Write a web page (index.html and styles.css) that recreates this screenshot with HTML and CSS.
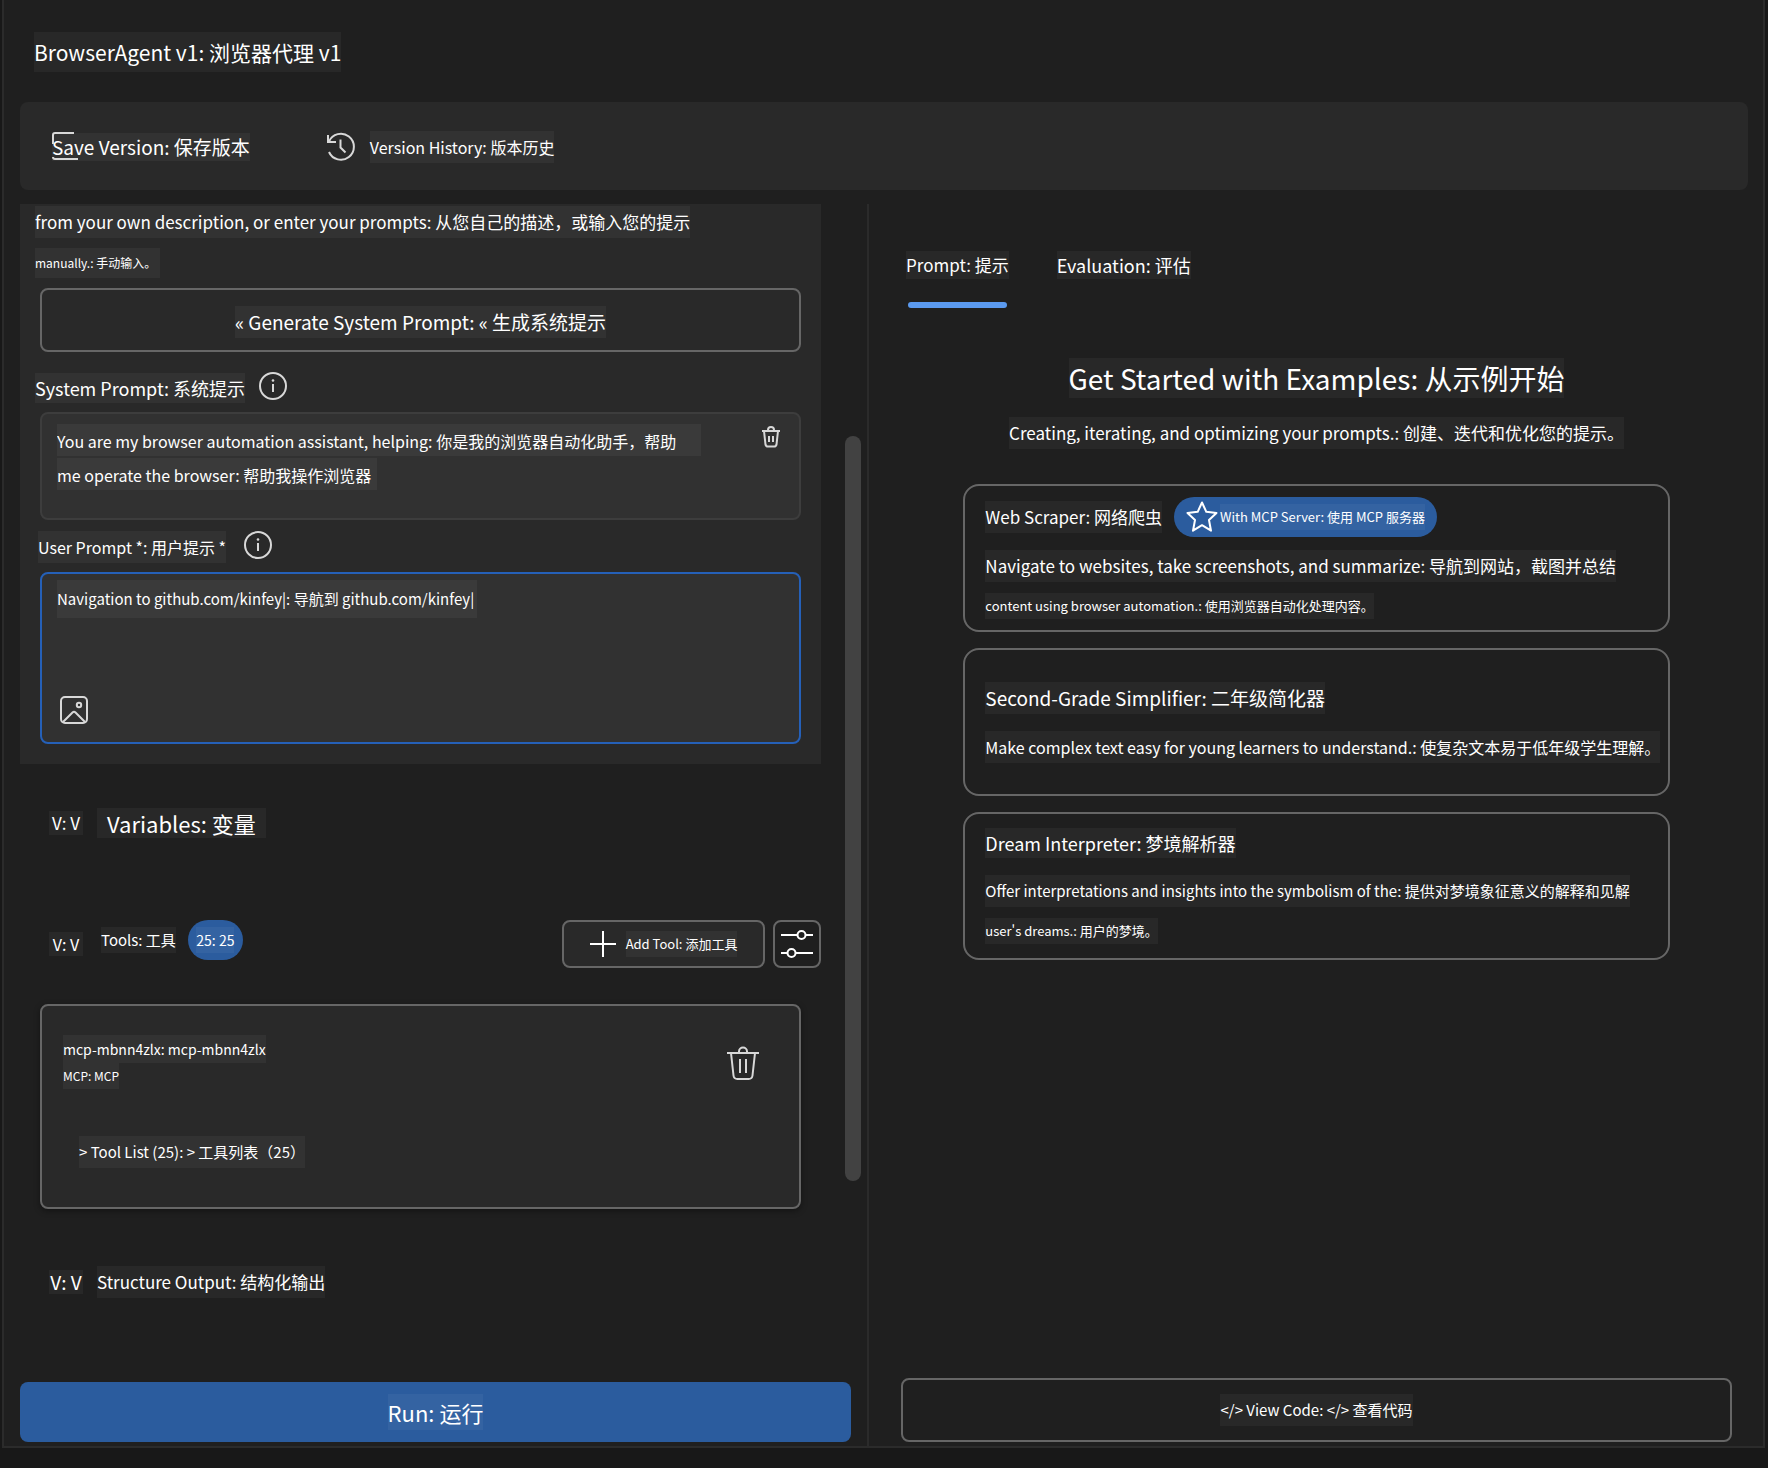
FILE: index.html
```html
<!DOCTYPE html>
<html lang="zh-CN">
<head>
  <meta charset="UTF-8">
  <meta name="viewport" content="width=device-width, initial-scale=1">
  <title>BrowserAgent v1</title>
  <link rel="stylesheet" href="styles.css">
</head>
<body>
<div class="page">
  <header class="header">
    <h1 class="chip size-21">BrowserAgent v1: 浏览器代理 v1</h1>
  </header>

  <nav class="toolbar">
    <button class="tool-btn save">
      <svg class="save-icon" width="28" height="28" viewBox="0 0 28 28"><path d="M1 12V3Q1 1 3 1H22M1 25Q1 27 3 27H26"/></svg>
      <span class="chip size-19">Save Version: 保存版本</span>
    </button>
    <button class="tool-btn">
      <svg class="icon" width="30" height="30" viewBox="0 0 30 30"><path d="M2 3v7h8M3 9.500A13 13 0 1 1 3 20M14.500 7.500v8l5 5"/></svg>
      <span class="chip size-16">Version History: 版本历史</span>
    </button>
  </nav>

  <main class="columns">
    <section class="left">
      <div class="scroll-area">
        <div class="content">
          <div class="prompt-panel">
            <p class="chip size-17">from your own description, or enter your prompts: 从您自己的描述，或输入您的提示</p>
            <p class="chip size-12 manual">manually.: 手动输入。</p>
            <button class="outline-btn generate"><span class="chip size-19">« Generate System Prompt: « 生成系统提示</span></button>

            <div class="field-label">
              <label class="chip size-18" for="system">System Prompt: 系统提示</label>
              <svg class="icon" width="28" height="28" viewBox="0 0 28 28"><circle cx="14" cy="14" r="13"/><path d="M14 12v8"/><circle class="dot" cx="14" cy="8.500" r="1.300"/></svg>
            </div>
            <div class="field system">
              <textarea id="system" class="size-16" rows="2" spellcheck="false">You are my browser automation assistant, helping: 你是我的浏览器自动化助手，帮助
me operate the browser: 帮助我操作浏览器</textarea>
              <button class="icon-btn" aria-label="Clear">
                <svg class="icon" width="20" height="22" viewBox="0 0 20 22"><path d="M1 5h18M7 5V4a3 3 0 0 1 6 0v1M3 5l1.500 13.500a2.500 2.500 0 0 0 2.500 2h6a2.500 2.500 0 0 0 2.500-2L17 5M8 10v6M12 10v6"/></svg>
              </button>
            </div>

            <div class="field-label user-label">
              <label class="chip size-16" for="user">User Prompt *: 用户提示 *</label>
              <svg class="icon" width="28" height="28" viewBox="0 0 28 28"><circle cx="14" cy="14" r="13"/><path d="M14 12v8"/><circle class="dot" cx="14" cy="8.500" r="1.300"/></svg>
            </div>
            <div class="field user">
              <textarea id="user" class="size-15" rows="1" spellcheck="false">Navigation to github.com/kinfey|: 导航到 github.com/kinfey|</textarea>
              <button class="icon-btn" aria-label="Add image">
                <svg class="icon" width="28" height="28" viewBox="0 0 28 28"><rect x="1" y="1" width="26" height="26" rx="4"/><circle cx="19" cy="9" r="2.200"/><path d="M3 26l9.500-9.500q1.500-1.500 3 0L25 26"/></svg>
              </button>
            </div>
          </div>

          <div class="group variables">
            <button class="chip toggle size-17">V: V</button>
            <h2 class="chip size-22">Variables: 变量</h2>
          </div>

          <div class="group tools">
            <button class="chip toggle size-16">V: V</button>
            <div class="tools-title">
              <h2 class="chip size-15">Tools: 工具</h2>
              <span class="count"><span class="chip size-14">25: 25</span></span>
            </div>
            <div class="tools-actions">
              <button class="outline-btn add-tool">
                <svg class="icon bright" width="26" height="26" viewBox="0 0 26 26"><path d="M13 0v26M0 13h26"/></svg>
                <span class="chip size-13">Add Tool: 添加工具</span>
              </button>
              <button class="outline-btn settings" aria-label="Settings">
                <svg class="icon bright" width="32" height="32" viewBox="0 0 32 32"><path d="M0 7h16M25 7h7M0 25h6M15 25h17"/><circle cx="20.500" cy="7" r="4"/><circle cx="10.500" cy="25" r="4"/></svg>
              </button>
            </div>
          </div>

          <article class="tool-card">
            <div>
              <h3 class="chip size-14">mcp-mbnn4zlx: mcp-mbnn4zlx</h3>
              <p class="chip size-12">MCP: MCP</p>
              <button class="chip tool-list size-15">&gt; Tool List (25): &gt; 工具列表（25）</button>
            </div>
            <button class="icon-btn" aria-label="Remove tool">
              <svg class="icon" width="32" height="34" viewBox="0 0 32 34"><path d="M0 7h32M12 7V5.500a4 4 0 0 1 8 0V7M4 7l2.500 22.500a4 4 0 0 0 4 3.500h11a4 4 0 0 0 4-3.500L28 7M13 13v14M19 13v14"/></svg>
            </button>
          </article>

          <div class="group structure">
            <button class="chip toggle size-19">V: V</button>
            <h2 class="chip size-17">Structure Output: 结构化输出</h2>
          </div>
        </div>
        <div class="scrollbar"><div class="thumb"></div></div>
      </div>
      <button class="run"><span class="chip size-22">Run: 运行</span></button>
    </section>

    <section class="right">
      <div class="tabs">
        <button class="tab active"><span class="chip size-17">Prompt: 提示</span></button>
        <button class="tab"><span class="chip size-18">Evaluation: 评估</span></button>
      </div>

      <div class="examples">
        <h2 class="chip size-28">Get Started with Examples: 从示例开始</h2>
        <p class="chip intro size-17">Creating, iterating, and optimizing your prompts.: 创建、迭代和优化您的提示。</p>

        <article class="example">
          <div class="example-head">
            <h3 class="chip size-17">Web Scraper: 网络爬虫</h3>
            <span class="badge">
              <svg class="icon bright" width="32" height="32" viewBox="0 0 32 32"><path stroke-linejoin="round" d="M16 1.500l4.300 9.300 10.200 1.200-7.500 7 2 10.700-9-5.500-9 5.500 2-10.700-7.500-7 10.200-1.200z"/></svg>
              <span class="chip size-13">With MCP Server: 使用 MCP 服务器</span>
            </span>
          </div>
          <p class="chip size-17">Navigate to websites, take screenshots, and summarize: 导航到网站，截图并总结</p>
          <p class="chip size-13">content using browser automation.: 使用浏览器自动化处理内容。</p>
        </article>

        <article class="example">
          <h3 class="chip size-19">Second-Grade Simplifier: 二年级简化器</h3>
          <p class="chip size-16">Make complex text easy for young learners to understand.: 使复杂文本易于低年级学生理解。</p>
        </article>

        <article class="example">
          <h3 class="chip size-18">Dream Interpreter: 梦境解析器</h3>
          <p class="chip size-15">Offer interpretations and insights into the symbolism of the: 提供对梦境象征意义的解释和见解</p>
          <p class="chip size-13">user's dreams.: 用户的梦境。</p>
        </article>
      </div>

      <button class="outline-btn view-code"><span class="chip size-15">&lt;/&gt; View Code: &lt;/&gt; 查看代码</span></button>
    </section>
  </main>
</div>
<footer class="status-bar"></footer>
</body>
</html>
```
FILE: styles.css
```css
* {
  box-sizing: border-box;
}

body {
  margin: 0;
  min-height: 100vh;
  display: flex;
  flex-direction: column;
  background: #181818;
  color: #fff;
  font-family: "Noto Sans CJK SC", "Noto Sans", sans-serif;
}

h1, h2, h3, p {
  margin: 0;
  font-weight: 400;
}

button, textarea {
  margin: 0;
  padding: 0;
  border: 0;
  background: none;
  color: inherit;
  font-family: inherit;
}

button {
  cursor: pointer;
}

.page {
  flex: 1;
  display: flex;
  flex-direction: column;
  margin: 0 3px 0 2px;
  border: 2px solid #2b2b2b;
  border-top: 0;
  background: #1f1f1f;
}

.status-bar {
  height: 20px;
}

/* Text with a slightly lighter plate behind it */
.chip {
  display: block;
  width: fit-content;
  background: rgba(255, 255, 255, 0.045);
  line-height: 32px;
  white-space: nowrap;
}

.size-12 { font-size: 12px; line-height: 26px; }
.size-13 { font-size: 13px; line-height: 26px; }
.size-14 { font-size: 14px; line-height: 28px; }
.size-15 { font-size: 15px; line-height: 32px; }
.size-16 { font-size: 16px; line-height: 32px; }
.size-17 { font-size: 17px; line-height: 32px; }
.size-18 { font-size: 18px; line-height: 30px; }
.size-19 { font-size: 19px; line-height: 32px; }
.size-21 { font-size: 21px; line-height: 32px; }
.size-22 { font-size: 22px; line-height: 36px; }
.size-28 { font-size: 28px; line-height: 40px; }

.icon {
  flex: none;
  display: block;
  fill: none;
  stroke: #d8d8d8;
  stroke-width: 2;
}

.icon.bright {
  stroke: #fff;
}

.icon .dot {
  fill: #d8d8d8;
  stroke: none;
}

/* Header */
.header {
  padding: 32px 30px 30px;
}

.header .chip {
  line-height: 40px;
}

.toolbar {
  display: flex;
  align-items: center;
  gap: 76px;
  height: 88px;
  margin: 0 15px 14px 16px;
  padding: 2px 32px 0;
  border-radius: 8px;
  background: #292929;
}

.tool-btn {
  display: flex;
  align-items: center;
  gap: 14px;
}

.save {
  position: relative;
}

.save .chip {
  line-height: 28px;
}

.save-icon {
  position: absolute;
  left: 0;
  top: -1px;
  fill: none;
  stroke: #d8d8d8;
  stroke-width: 2;
}

.columns {
  flex: 1;
  display: grid;
  grid-template-columns: 866fr 895fr;
}

/* Left column */
.left {
  display: flex;
  flex-direction: column;
  padding: 0 16px 4px;
  border-right: 2px solid #2b2b2b;
}

.scroll-area {
  flex: 1;
  display: flex;
  gap: 24px;
  margin-right: -10px;
}

.content {
  flex: 1;
}

.scrollbar {
  width: 16px;
  padding-top: 232px;
}

.thumb {
  height: 745px;
  border-radius: 8px;
  background: #424242;
}

.prompt-panel {
  padding: 2px 20px 20px 15px;
  background: #292929;
}

.manual {
  margin: 10px 0;
  padding-right: 4px;
  line-height: 30px;
}

.outline-btn {
  display: flex;
  align-items: center;
  justify-content: center;
  border: 2px solid #666;
  border-radius: 8px;
}

.generate {
  width: calc(100% - 5px);
  height: 64px;
  margin: 0 0 20px 5px;
  padding-top: 4px;
}

.field-label {
  display: flex;
  align-items: center;
  gap: 14px;
  height: 32px;
  margin-bottom: 8px;
}

.field-label .icon {
  margin-bottom: 4px;
}

.user-label {
  gap: 18px;
  padding-left: 3px;
  margin-bottom: 9px;
}

.field {
  display: flex;
  margin-left: 5px;
  padding: 10px 15px;
  border: 2px solid #3d3d3d;
  border-radius: 8px;
  background: #313131;
}

.field textarea {
  display: block;
  resize: none;
  outline: none;
  overflow: hidden;
  white-space: pre;
}

.icon-btn {
  align-self: flex-start;
}

.system {
  justify-content: space-between;
  height: 108px;
  margin-bottom: 11px;
  padding-right: 18px;
}

.system textarea {
  width: 644px;
  height: 68px;
  line-height: 34px;
  background:
    linear-gradient(#3a3a3a, #3a3a3a) 0 0 / 100% 32px no-repeat,
    linear-gradient(#3a3a3a, #3a3a3a) 0 34px / 320px 32px no-repeat;
}

.system .icon-btn {
  margin-top: 2px;
}

.user {
  flex-direction: column;
  justify-content: space-between;
  height: 172px;
  padding: 6px 15px 18px;
  border-color: #2560b8;
}

.user .icon-btn {
  margin-left: 3px;
}

.user textarea {
  width: 420px;
  height: 38px;
  line-height: 38px;
  background: #3a3a3a;
}

.group {
  display: flex;
  align-items: center;
  gap: 14px;
  padding-left: 29px;
}

.toggle {
  min-width: 34px;
  line-height: 24px;
}

.variables {
  padding-top: 44px;
}

.variables h2 {
  padding: 0 10px;
  line-height: 30px;
}

.tools {
  gap: 18px;
  padding-top: 82px;
}

.tools-title {
  align-self: flex-start;
  display: flex;
  align-items: center;
  gap: 12px;
}

.tools-title .chip {
  line-height: 26px;
}

.count {
  display: flex;
  align-items: center;
  justify-content: center;
  width: 55px;
  height: 40px;
  border-radius: 20px;
  background: #2b5c9e;
}

.tools-actions {
  display: flex;
  gap: 8px;
  margin-left: auto;
}

.add-tool {
  gap: 10px;
  width: 203px;
  height: 48px;
  background: #292929;
}

.settings {
  width: 48px;
  height: 48px;
}

.tool-card {
  display: flex;
  justify-content: space-between;
  height: 205px;
  margin: 36px 20px 57px;
  padding: 29px 40px 0 21px;
  border: 2px solid #666;
  border-radius: 8px;
  background: #292929;
  box-shadow: 0 2px 6px rgba(0, 0, 0, 0.4);
}

.tool-card .icon-btn {
  margin-top: 11px;
}

.tool-list {
  margin: 47px 0 0 16px;
}

.run {
  display: flex;
  align-items: center;
  justify-content: center;
  height: 60px;
  border-radius: 8px;
  background: #2b5c9e;
}

/* Right column */
.right {
  display: flex;
  flex-direction: column;
  padding: 47px 31px 4px 32px;
}

.tabs {
  display: flex;
  gap: 48px;
  padding-left: 5px;
}

.tab {
  padding-bottom: 29px;
}

.tab .chip {
  line-height: 28px;
}

.tab.active {
  padding-bottom: 0;
}

.tab.active::after {
  content: "";
  display: block;
  height: 6px;
  margin: 23px 2px 0;
  border-radius: 3px;
  background: #5b9aef;
}

.examples {
  flex: 1;
  display: flex;
  flex-direction: column;
  align-items: center;
  padding-top: 50px;
}

.intro {
  margin: 19px 0 35px;
}

.example {
  display: flex;
  flex-direction: column;
  justify-content: center;
  gap: 11px;
  width: 85%;
  min-height: 148px;
  margin-bottom: 16px;
  padding: 0 8px 0 20px;
  border: 2px solid #666;
  border-radius: 16px;
}

.example > h3 {
  margin-bottom: 6px;
}

.example-head {
  display: flex;
  align-items: center;
  gap: 12px;
  margin-bottom: 2px;
}

.badge {
  display: flex;
  align-items: center;
  gap: 2px;
  height: 40px;
  padding: 0 12px;
  border-radius: 20px;
  background: #2b5c9e;
}

.view-code {
  height: 64px;
}
```
